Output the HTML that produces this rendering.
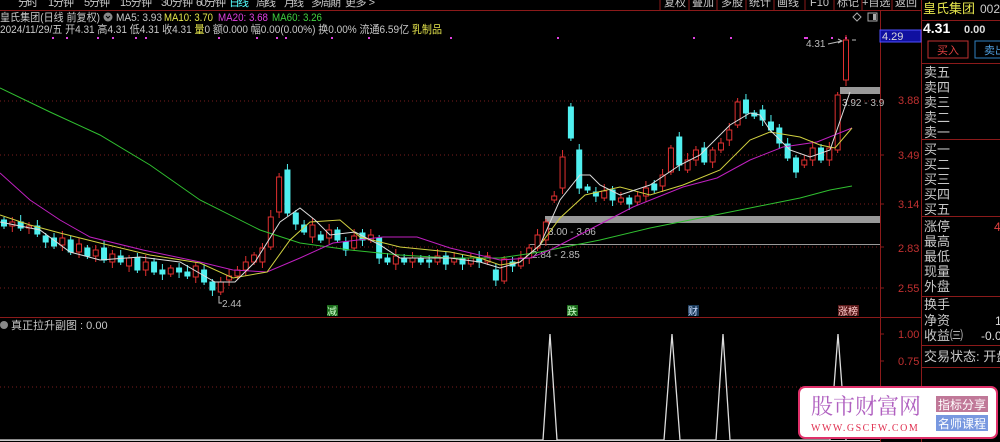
<!DOCTYPE html>
<html><head><meta charset="utf-8">
<style>
body{margin:0;background:#000;width:1000px;height:442px;overflow:hidden;font-family:"Liberation Sans","Noto Sans CJK SC",sans-serif;}
svg{display:block}
.t{font-family:"Liberation Sans","Noto Sans CJK SC",sans-serif}
</style></head><body>
<svg id="s" width="1000" height="442" xmlns="http://www.w3.org/2000/svg" class="t">
<rect width="1000" height="442" fill="#000"/>
<g font-size="11" fill="#c8c8c8" lengthAdjust="spacingAndGlyphs">
<text x="18" y="6" textLength="20">分时</text><text x="48" y="6" textLength="26">1分钟</text><text x="84" y="6" textLength="26">5分钟</text><text x="120" y="6" textLength="32">15分钟</text><text x="161" y="6" textLength="32">30分钟</text><text x="196" y="6" textLength="30">60分钟</text>
<text x="229" y="6" fill="#5ff" textLength="20">日线</text><text x="256" y="6" textLength="20">周线</text><text x="284" y="6" textLength="20">月线</text><text x="311" y="6" textLength="30">多周期</text><text x="345" y="6" textLength="30">更多 &gt;</text>
</g>
<g stroke="#8b1a1a" fill="none">
<path d="M660 0V10M689 0V10M717 0V10M746 0V10M774 0V10M805 0V10M834 0V10M862 0V10M892 0V10"/>
</g>
<g font-size="11" fill="#c8c8c8">
<text x="664" y="6">复权</text><text x="692" y="6">叠加</text><text x="721" y="6">多股</text><text x="749" y="6">统计</text><text x="777" y="6">画线</text><text x="810" y="6">F10</text><text x="837" y="6">标记</text><text x="862" y="6">+自选</text><text x="895" y="6">返回</text>
</g>
<line x1="0" y1="10.5" x2="921" y2="10.5" stroke="#8b1a1a"/>
<text x="0" y="21" font-size="11" fill="#c8c8c8" textLength="100" lengthAdjust="spacingAndGlyphs">皇氏集团(日线 前复权)</text>
<circle cx="108" cy="17" r="4.5" fill="#888"/><path d="M106 16l2 2 2-2" stroke="#000" fill="none"/>
<text x="116" y="21" font-size="11" fill="#c8c8c8" textLength="46" lengthAdjust="spacingAndGlyphs">MA5: 3.93</text>
<text x="164" y="21" font-size="11" fill="#e6e64c" textLength="49" lengthAdjust="spacingAndGlyphs">MA10: 3.70</text>
<text x="218" y="21" font-size="11" fill="#e040e0" textLength="50" lengthAdjust="spacingAndGlyphs">MA20: 3.68</text>
<text x="272" y="21" font-size="11" fill="#40d040" textLength="50" lengthAdjust="spacingAndGlyphs">MA60: 3.26</text>
<text x="0" y="33" font-size="11" fill="#c8c8c8" textLength="442" lengthAdjust="spacingAndGlyphs">2024/11/29/五 开4.31 高4.31 低4.31 收4.31 <tspan fill="#e6e64c">量</tspan>0 额0.000 幅0.00(0.00%) 换0.00% 流通6.59亿 <tspan fill="#e6e64c">乳制品</tspan></text>
<g id="dots" fill="#e040e0"></g>
<g stroke="#7a1e1e" stroke-dasharray="1,3">
<path d="M0 101H880M0 155H880M0 204H880M0 247H880M0 288H880M0 387H880"/>
</g>
<g stroke="#8b1a1a"><path d="M880.5 10V442M921.5 0V442"/><path d="M0 317.5H921"/></g>
<g stroke="#8b1a1a"><path d="M880 101h4M880 155h4M880 204h4M880 247h4M880 288h4M880 334h4M880 361h4M880 387h4"/></g>
<g font-size="11" fill="#c03030">
<text x="898" y="104">3.88</text><text x="898" y="159">3.49</text><text x="898" y="208">3.14</text><text x="898" y="252">2.83</text><text x="898" y="292">2.55</text>
<text x="898" y="338">1.00</text><text x="898" y="365">0.75</text>
</g>
<rect x="880" y="30" width="41" height="12" fill="#1010a0" stroke="#5050ff"/>
<text x="882" y="40" font-size="11" fill="#ddd">4.29</text>
<path d="M857 13l4 4-4 4-4-4z" stroke="#aaa" fill="none"/>
<rect x="868" y="13" width="9" height="8" stroke="#aaa" fill="none"/><rect x="873" y="14" width="3" height="6" fill="#aaa"/>
<rect x="545" y="216" width="335" height="7" fill="#999"/>
<line x1="530" y1="244.5" x2="880" y2="244.5" stroke="#999"/>
<rect x="840" y="87" width="40" height="7" fill="#999"/>
<g font-size="10" fill="#bbb">
<text x="548" y="235">3.00 - 3.06</text><text x="532" y="258">2.84 - 2.85</text><text x="842" y="106">3.92 - 3.9</text>
<text x="806" y="47">4.31</text><text x="222" y="307">2.44</text>
</g>
<path d="M828 44l14-3M838 39l4 2-4 2M219 296v7h3" stroke="#bbb" fill="none"/>
<path d="M852 40h4" stroke="#bbb"/>
<g id="c"></g>
<polyline fill="none" stroke="#30c030" points="0,88 50,112 100,135 150,165 200,200 260,230 300,243 350,250 400,255 450,258 500,258 540,252 600,240 650,228 700,218 750,208 800,198 830,190 852,186"/>
<polyline fill="none" stroke="#c020c0" points="0,173 30,200 60,220 90,237 143,250 200,262 233,270 267,272 300,258 333,243 383,237 417,237 450,248 500,260 530,258 550,250 583,233 633,207 683,187 717,178 750,160 783,147 817,142 852,128"/>
<polyline fill="none" stroke="#d0d040" points="0,215 30,225 60,233 100,243 150,255 200,263 233,278 267,272 290,240 310,222 340,220 360,237 400,247 450,252 480,258 500,265 520,262 540,245 560,218 585,195 620,187 650,195 683,185 720,170 750,140 770,132 800,137 820,145 835,148 852,128"/>
<polyline fill="none" stroke="#ddd" points="0,222 40,230 70,252 100,260 140,257 180,262 215,282 235,282 255,262 280,222 300,208 315,220 330,235 355,232 380,245 400,258 450,258 480,262 500,268 520,262 540,245 560,200 580,175 590,175 600,185 620,195 650,185 680,165 700,155 730,125 750,113 760,115 770,130 790,150 810,157 830,150 850,92"/>
<rect x="327" y="305" width="11" height="11" fill="#1a6a1a"/><text x="327" y="315" font-size="10" fill="#cfc">减</text>
<rect x="567" y="305" width="11" height="11" fill="#1a6a1a"/><text x="567" y="315" font-size="10" fill="#cfc">跌</text>
<rect x="688" y="305" width="11" height="11" fill="#1a3a5a"/><text x="688" y="315" font-size="10" fill="#cdf">财</text>
<rect x="838" y="305" width="21" height="11" fill="#5a1a1a"/><text x="838" y="315" font-size="10" fill="#fcc">涨榜</text>
<circle cx="4" cy="325" r="4" fill="#888"/>
<text x="11" y="329" font-size="11" fill="#c8c8c8">真正拉升副图 : 0.00</text>
<polyline fill="none" stroke="#ddd" stroke-width="1.3" points="0,440 543,440 550,334 557,440 664,440 672,334 680,440 716,440 723,334 730,440 830,440 838,334 846,440"/>
<line x1="0" y1="440.5" x2="880" y2="440.5" stroke="#ccc"/>
<text x="923" y="13" font-size="13" fill="#e6e64c">皇氏集团</text><text x="980" y="13" font-size="12" fill="#ccc">002</text>
<line x1="921" y1="20.5" x2="1000" y2="20.5" stroke="#8b1a1a"/>
<text x="923" y="33" font-size="14" font-weight="bold" fill="#fff">4.31</text><text x="964" y="33" font-size="11" font-weight="bold" fill="#ddd">0.00</text>
<rect x="928" y="41" width="40" height="17" fill="none" stroke="#c03030"/><text x="937" y="54" font-size="11" fill="#e04040">买入</text>
<rect x="975" y="41" width="30" height="17" fill="none" stroke="#3080c0"/><text x="984" y="54" font-size="11" fill="#50a0e0">卖出</text>
<line x1="921" y1="63.5" x2="1000" y2="63.5" stroke="#8b1a1a"/>
<g font-size="13" fill="#c8c8c8">
<text x="924" y="77">卖五</text><text x="924" y="92">卖四</text><text x="924" y="107">卖三</text><text x="924" y="122">卖二</text><text x="924" y="137">卖一</text>
<text x="924" y="154">买一</text><text x="924" y="169">买二</text><text x="924" y="184">买三</text><text x="924" y="199">买四</text><text x="924" y="214">买五</text>
<text x="924" y="231">涨停</text><text x="924" y="246">最高</text><text x="924" y="261">最低</text><text x="924" y="276">现量</text><text x="924" y="291">外盘</text>
<text x="924" y="309">换手</text><text x="924" y="325">净资</text><text x="924" y="340">收益㈢</text>
<text x="924" y="361">交易状态: 开盘</text>
</g>
<text x="994" y="231" font-size="12" fill="#e04040">4</text>
<text x="995" y="325" font-size="12" fill="#ddd">1</text>
<text x="981" y="340" font-size="12" fill="#ddd">-0.0</text>
<g stroke="#8b1a1a"><path d="M921 139.5H1000M921 216.5H1000M921 296.5H1000M921 345.5H1000M921 367.5H1000"/></g>
<rect x="799" y="387" width="198" height="51" rx="6" fill="#fff" stroke="#e0306a" stroke-width="2"/>
<text x="811" y="414" font-size="22" fill="#b060c0" font-family="Liberation Serif,Noto Serif CJK SC,serif">股市财富网</text>
<text x="811" y="431" font-size="10" fill="#e03050" font-family="Liberation Serif,serif" letter-spacing="1.5">WWW.GSCFW.COM</text>
<rect x="936" y="396" width="52" height="16" fill="#c07898"/><text x="938" y="409" font-size="12" fill="#fff">指标分享</text>
<rect x="936" y="415" width="52" height="16" fill="#7898e0"/><text x="938" y="428" font-size="12" fill="#fff">名师课程</text>
</svg>
<script>
var NS="http://www.w3.org/2000/svg";
var d=[[220,226],[226,222],[222,228],[228,226],[226,234],[236,242],[238,246],[245,238],[240,252],[252,244],[248,256],[256,250],[248,260],[262,254],[256,262],[266,258],[258,270],[270,262],[262,272],[270,274],[274,268],[268,272],[272,276],[277,266],[270,282],[282,290],[292,282],[280,276],[276,270],[270,262],[262,255],[262,248],[247,217],[212,177],[170,213],[213,224],[225,232],[237,225],[235,240],[238,230],[230,240],[242,250],[248,236],[233,240],[240,235],[238,258],[258,262],[264,256],[258,262],[262,258],[258,262],[260,262],[262,256],[256,264],[262,258],[258,264],[264,258],[258,262],[262,256],[270,280],[281,259],[262,266],[266,258],[258,248],[248,235],[240,222],[200,196],[188,157],[107,138],[150,188],[187,190],[192,196],[198,191],[190,200],[202,198],[198,204],[202,196],[196,188],[184,190],[186,175],[172,148],[137,165],[170,160],[160,150],[148,162],[162,150],[150,143],[140,130],[125,102],[100,113],[113,116],[110,120],[122,130],[128,143],[144,158],[158,172],[165,160],[160,148],[148,160],[160,148],[150,95],[80,40]];
var g=document.getElementById("c"),n=d.length;
for(var i=0;i<n;i++){var x=4+i*(842/(n-1)),o=d[i][0],c=d[i][1],up=c<o,t=Math.min(o,c),b=Math.max(o,c);if(b-t<1)b=t+1;
var col=up?"#e03030":"#50f0f0";var l=document.createElementNS(NS,"line");l.setAttribute("x1",x);l.setAttribute("x2",x);l.setAttribute("y1",t-3-(i*7%5));l.setAttribute("y2",b+3+(i*3%6));l.setAttribute("stroke",col);g.appendChild(l);
var r=document.createElementNS(NS,"rect");r.setAttribute("x",x-2.5);r.setAttribute("y",t);r.setAttribute("width",5);r.setAttribute("height",b-t);r.setAttribute("fill",up?"#000":col);r.setAttribute("stroke",col);g.appendChild(r);}
var dg=document.getElementById("dots");
[52,66,97,112,135,145,218,256,276,285,331,368,450,557,693,730,804,806,831,845].forEach(function(x){var e=document.createElementNS(NS,"rect");e.setAttribute("x",x);e.setAttribute("y",37);e.setAttribute("width",2);e.setAttribute("height",2);dg.appendChild(e);});
</script>
</body></html>
